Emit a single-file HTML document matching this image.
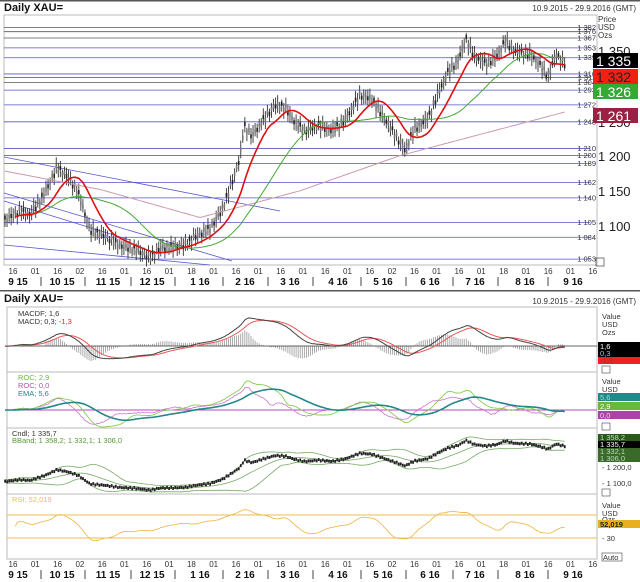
<!DOCTYPE html>
<html><head><meta charset="utf-8"><style>
body{margin:0;background:#fff;width:640px;height:582px;overflow:hidden;font-family:"Liberation Sans",sans-serif}
svg{position:absolute;left:0;top:0}
text{font-family:"Liberation Sans",sans-serif}
</style></head><body>
<svg id="s" width="640" height="582" viewBox="0 0 640 582">
<rect x="0" y="0" width="640" height="1.5" fill="#555"/>
<text x="4" y="11" font-size="11" font-weight="bold" fill="#111">Daily XAU=</text>
<text x="636" y="11" font-size="8" fill="#333" text-anchor="end">10.9.2015 - 29.9.2016 (GMT)</text>
<rect x="4" y="15" width="593" height="250" fill="none" stroke="#bbb"/>
<g id="hl"></g>
<g id="top"></g>
<g font-size="8" fill="#333">
<text x="598" y="22">Price</text><text x="598" y="30">USD</text><text x="598" y="38">Ozs</text>
</g>
<g id="plab" font-size="7.5" fill="#334" text-anchor="end"></g>
<g font-size="13" fill="#222"><text x="598" y="56">1 350</text><text x="598" y="127">1 250</text><text x="598" y="161">1 200</text><text x="598" y="196">1 150</text><text x="598" y="231">1 100</text></g>
<rect x="593" y="53" width="45" height="15" fill="#000"/><text x="596" y="66" font-size="14" fill="#fff">1 335</text>
<rect x="593" y="69" width="45" height="15" fill="#e21"/><text x="596" y="82" font-size="14" fill="#222">1 332</text>
<rect x="593" y="84" width="45" height="15" fill="#3a3"/><text x="596" y="97" font-size="14" fill="#fff">1 326</text>
<rect x="593" y="108" width="45" height="15" fill="#924"/><text x="596" y="121" font-size="14" fill="#fff">1 261</text>
<rect x="596" y="258" width="8" height="8" fill="none" stroke="#444" stroke-width=".7"/>
<g id="xa1"></g>

<rect x="0" y="290" width="640" height="1.5" fill="#555"/>
<text x="4" y="302" font-size="11" font-weight="bold" fill="#111">Daily XAU=</text>
<text x="636" y="304" font-size="8" fill="#333" text-anchor="end">10.9.2015 - 29.9.2016 (GMT)</text>
<rect x="7" y="307" width="590" height="252" fill="none" stroke="#bbb"/>
<line x1="7" y1="372" x2="597" y2="372" stroke="#bbb"/>
<line x1="7" y1="428" x2="597" y2="428" stroke="#bbb"/>
<line x1="7" y1="494" x2="597" y2="494" stroke="#bbb"/>
<g id="low"></g>
<g font-size="7.5">
<text x="18" y="316" fill="#333">MACDF; 1,6</text><text x="18" y="324" fill="#333">MACD; 0,3; <tspan fill="#e22">-1,3</tspan></text>
<text x="18" y="380" fill="#6b3">ROC; 2,9</text><text x="18" y="388" fill="#a5a">ROC; 0,0</text><text x="18" y="396" fill="#288">EMA; 5,6</text>
<text x="12" y="436" fill="#333">Cndl; 1 335,7</text><text x="12" y="443" fill="#593">BBand; 1 358,2; 1 332,1; 1 306,0</text>
<text x="12" y="502" fill="#eb5">RSI; 52,019</text>
</g>
<g font-size="7.5" fill="#333">
<text x="602" y="319">Value</text><text x="602" y="327">USD</text><text x="602" y="335">Ozs</text>
<rect x="598" y="342" width="42" height="8" fill="#000"/><text x="600" y="349" fill="#fff">1,6</text>
<rect x="598" y="350" width="42" height="7" fill="#000"/><text x="600" y="356" fill="#bbb">0,3</text>
<rect x="598" y="357" width="42" height="7" fill="#e22"/><text x="600" y="363" fill="#933">-1,3</text>
<rect x="602" y="366" width="8" height="7" fill="none" stroke="#444" stroke-width=".6"/>
<text x="602" y="384">Value</text><text x="602" y="392">USD</text>
<rect x="598" y="393" width="42" height="8" fill="#288"/><text x="600" y="400" fill="#9dd">5,6</text>
<rect x="598" y="402" width="42" height="8" fill="#6b3"/><text x="600" y="409" fill="#fff">2,9</text>
<rect x="598" y="411" width="42" height="8" fill="#a4a"/><text x="600" y="418" fill="#ecf">0,0</text>
<rect x="602" y="423" width="8" height="7" fill="none" stroke="#444" stroke-width=".6"/>
<rect x="598" y="434" width="42" height="7" fill="#2a5a1a"/><text x="600" y="440" fill="#bdb">1 358,2</text>
<rect x="598" y="441" width="42" height="7" fill="#000"/><text x="600" y="447" fill="#fff">1 335,7</text>
<rect x="598" y="448" width="42" height="7" fill="#3a6a2a"/><text x="600" y="454" fill="#bdb">1 332,1</text>
<rect x="598" y="455" width="42" height="7" fill="#3a6a2a"/><text x="600" y="461" fill="#bdb">1 306,0</text>
<text x="602" y="470">- 1 200,0</text><text x="602" y="486">- 1 100,0</text>
<rect x="602" y="489" width="8" height="7" fill="none" stroke="#444" stroke-width=".6"/>
<text x="602" y="508">Value</text><text x="602" y="516">USD</text><text x="602" y="522">Ozs</text>
<rect x="598" y="520" width="42" height="8" fill="#e8b020"/><text x="600" y="527" fill="#222" font-weight="bold">52,019</text>
<text x="602" y="541">- 30</text>
<rect x="602" y="553" width="20" height="8" fill="none" stroke="#444" stroke-width=".6"/><text x="603" y="560">Auto</text>
</g>
<g id="xa2"></g>
</svg>
<script>
var NS="http://www.w3.org/2000/svg";
function el(g,t,a){var e=document.createElementNS(NS,t);for(var k in a)e.setAttribute(k,a[k]);document.getElementById(g).appendChild(e);return e;}
var y=function(p){return 50+(1350-p)*0.704;};
var lv=[[1382,'#556'],[1376,'#555'],[1367,'#555'],[1353,'#55c'],[1339,'#55c'],[1316,'#55c'],[1311,'#55c'],[1304,'#555'],[1293,'#55c'],[1272,'#55c'],[1248,'#55c'],[1210,'#55c'],[1200,'#555'],[1189,'#55c'],[1162,'#55c'],[1140,'#55c'],[1105,'#55c'],[1084,'#55c'],[1053,'#55c']];
lv.forEach(function(l){var yy=y(l[0]);el('hl','line',{x1:4,x2:590,y1:yy,y2:yy,stroke:l[1],'stroke-width':.8});
 var t=el('plab','text',{x:596,y:yy+2.5});t.textContent='1 '+String(l[0]).slice(1);});
[[4,157,280,211],[4,193,232,261],[4,245,210,265],[4,201,130,240]].forEach(function(a){el('hl','line',{x1:a[0],y1:a[1],x2:a[2],y2:a[3],stroke:'#55c','stroke-width':.8});});
var kp=[[5,1108],[20,1122],[30,1118],[45,1150],[57,1186],[68,1172],[78,1150],[90,1095],[105,1085],[120,1070],[135,1064],[150,1052],[160,1066],[172,1068],[185,1072],[195,1085],[210,1098],[222,1125],[232,1165],[240,1200],[244,1245],[252,1230],[262,1250],[275,1272],[285,1268],[295,1245],[305,1232],[318,1240],[332,1232],[345,1248],[360,1285],[372,1280],[384,1255],[396,1230],[405,1210],[414,1240],[428,1255],[438,1290],[448,1320],[458,1335],[466,1365],[474,1340],[486,1328],[497,1338],[505,1360],[515,1345],[530,1342],[540,1328],[548,1312],[556,1345],[562,1335],[565,1332]];
function mk(k){return function(x){for(var i=1;i<k.length;i++){if(x<=k[i][0]){var a=k[i-1],b=k[i];return a[1]+(b[1]-a[1])*(x-a[0])/(b[0]-a[0]);}}return k[k.length-1][1];};}
var interp=mk(kp);
var m2=mk([[5,1178],[100,1152],[200,1112],[300,1150],[400,1200],[565,1262]]);
var xs=[],P=[];for(var x=5;x<=565;x+=2.05){xs.push(x);P.push(interp(x)+4*Math.sin(x*1.7)+3*Math.sin(x*3.1));}
var N=P.length;
function sma(a,n){return a.map(function(v,i){var st=Math.max(0,i-n+1),s=0;for(var j=st;j<=i;j++)s+=a[j];return s/(i-st+1);});}
function ema(a,n){var k=2/(n+1),r=[],e=a[0];a.forEach(function(v){e=v*k+e*(1-k);r.push(e);});return r;}
var ma20=sma(P,14),ma50=sma(P,40),ma200=xs.map(m2);
function pl(g,xa,ya,c,w){el(g,'polyline',{points:xa.map(function(x,i){return x.toFixed(1)+','+ya[i].toFixed(1);}).join(' '),fill:'none',stroke:c,'stroke-width':w});}
for(var i=0;i<N;i++){var h=P[i]+6+Math.abs(Math.sin(i*3.7))*7,l=P[i]-6-Math.abs(Math.cos(i*2.1))*7;
 el('top','line',{x1:xs[i],x2:xs[i],y1:y(h),y2:y(l),stroke:'#333','stroke-width':.9});
 el('top','rect',{x:xs[i]-.8,y:y(P[i]+3),width:1.6,height:4,fill:(i%3?'#777':'#222')});}
pl('top',xs,ma200.map(y),'#c9a','1');
pl('top',xs.slice(10),ma50.slice(10).map(y),'#4a3','1');
pl('top',xs.slice(5),ma20.slice(5).map(y),'#d11','1.6');
var lab=[[18,'9 15'],[62,'10 15'],[108,'11 15'],[152,'12 15'],[200,'1 16'],[245,'2 16'],[290,'3 16'],[338,'4 16'],[383,'5 16'],[430,'6 16'],[475,'7 16'],[525,'8 16'],[573,'9 16']];
var sm=['16','01','16','02','16','01','16','01','18','01','16','01','16','01','16','01','16','02','16','01','16','01','18','01','16','01','16'];
function axis(g,y0){for(var i=0;i<27;i++){var t=el(g,'text',{x:13+i*22.3,y:y0,'font-size':'8',fill:'#333','text-anchor':'middle'});t.textContent=sm[i];}
 lab.forEach(function(l,i){var t=el(g,'text',{x:l[0],y:y0+11,'font-size':'10','font-weight':'bold',fill:'#111','text-anchor':'middle'});t.textContent=l[1];
  if(i<12){el(g,'line',{x1:l[0]+23,x2:l[0]+23,y1:y0+3,y2:y0+12,stroke:'#444'});}});}
axis('xa1',274);axis('xa2',567);
var e12=ema(P,12),e26=ema(P,26),mac=P.map(function(v,i){return e12[i]-e26[i];}),sig=ema(mac,9);
var my=function(v){return 346-v*0.75;};
for(var i=20;i<N;i+=1){var d=(mac[i]-sig[i]);el('low','line',{x1:xs[i],x2:xs[i],y1:346,y2:346-d*1.6,stroke:'#888','stroke-width':.7});}
el('low','line',{x1:7,x2:597,y1:346,y2:346,stroke:'#333','stroke-width':.8});
pl('low',xs,sig.map(my),'#e55','1');pl('low',xs,mac.map(my),'#444','1');
var roc=sma(P.map(function(v,i){var j=Math.max(0,i-20);return (v-P[j])/P[j]*100;}),3);
var roc2=sma(P.map(function(v,i){var j=Math.max(0,i-12);return (v-P[j])/P[j]*100;}),3);
var re=ema(roc,25);var ry=function(v){return 410-v*2.2;};
el('low','line',{x1:7,x2:597,y1:410,y2:410,stroke:'#b4b','stroke-width':.9});
pl('low',xs,roc2.map(ry),'#c7c','.8');pl('low',xs,roc.map(ry),'#8c5','.9');pl('low',xs,re.map(ry),'#288','1.6');
var by=function(p){return 467-(p-1200)*0.16;};
var m20=sma(P,20),sd=P.map(function(v,i){var st=Math.max(0,i-19),s=0;for(var j=st;j<=i;j++)s+=(P[j]-m20[i])*(P[j]-m20[i]);return Math.sqrt(s/(i-st+1));});
pl('low',xs,m20.map(function(v,i){return by(v+2*sd[i]+8);}),'#7a6','.8');pl('low',xs,m20.map(by),'#7a6','.8');pl('low',xs,m20.map(function(v,i){return by(v-2*sd[i]-8);}),'#7a6','.8');
for(var i=0;i<N;i++){el('low','rect',{x:xs[i]-.8,y:by(P[i])-1.5,width:1.8,height:3,fill:'#222'});}
var rs=P.map(function(v,i){var g=0,l=0;for(var j=Math.max(1,i-13);j<=i;j++){var d=P[j]-P[j-1];if(d>0)g+=d;else l-=d;}return 100*g/(g+l+.001);});
rs=sma(rs,5).map(function(v){return 50+(v-50)*0.6;});var sy=function(v){return 538-(v-30)*0.575;};
el('low','line',{x1:7,x2:597,y1:515,y2:515,stroke:'#eb5','stroke-width':.9});el('low','line',{x1:7,x2:597,y1:538,y2:538,stroke:'#eb5','stroke-width':.9});
pl('low',xs.slice(5),rs.slice(5).map(sy),'#eb5','.9');
</script>
</body></html>
